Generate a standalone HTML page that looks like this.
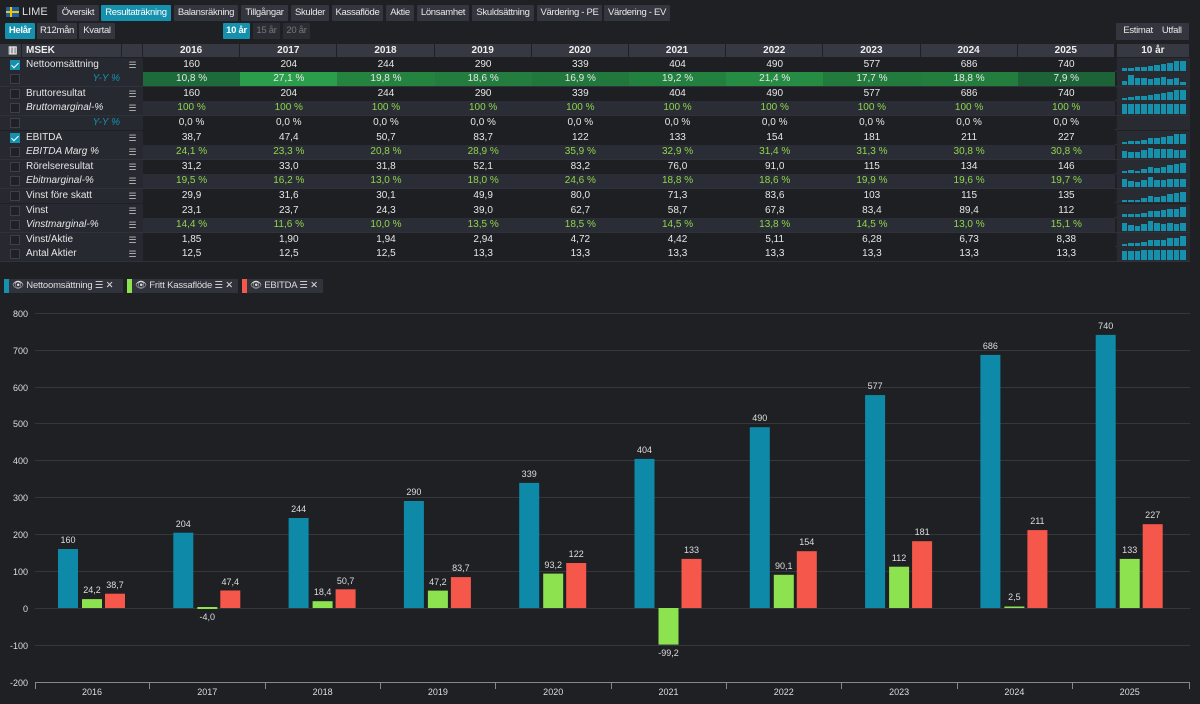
<!DOCTYPE html>
<html><head><meta charset="utf-8"><style>
*{box-sizing:border-box;margin:0;padding:0}
body{width:1200px;height:704px;background:#1e2024;font-family:"Liberation Sans",sans-serif;color:#e6e6e6;position:relative;overflow:hidden;font-size:10px}
.t{position:absolute;top:5px;height:16px;background:#33363e;color:#e8e8e8;font-size:9.5px;letter-spacing:-0.3px;line-height:16px;text-align:center;border-radius:1px;white-space:nowrap;overflow:hidden}
.t.a{background:#1591ae;color:#fff}
.hd{position:absolute;top:44px;left:0;width:1190px;height:13px;display:flex}
.hd div{background:#363942;border-right:1px solid #1e2024;font-weight:bold;font-size:10px;line-height:13px;text-align:center;color:#eee}
.r{position:absolute;left:0;width:1190px;height:14.6px;display:flex;border-bottom:1px solid #2f323a}
.r>div{font-size:10px;line-height:14px;text-align:center;height:14px;white-space:nowrap}
.c0{width:22px;background:#262930;position:relative}
.c1{width:100px;background:#262930;text-align:left!important;padding-left:4px}
.c2{width:21px;background:#262930;color:#bbb;font-size:9px!important}
.y{width:97.2px;background:#1d1f23}
.sp{width:73px;margin-left:2px;background:#282b32;display:flex;align-items:flex-end;padding:3px 3px 1px 5px;gap:1px}
.sp i{display:block;width:5.5px;background:#1591ae}
.it .y{background:#2a2d35;color:#8fd64a}
.it .c1{font-style:italic}
.cb{position:absolute;left:10px;top:2px;width:10px;height:10px;border:1px solid #3d4049;background:#1f2126}
.cb.k{background:#1591ae;border-color:#1591ae}
.cb.k:after{content:"";position:absolute;left:2px;top:0px;width:3px;height:6px;border:solid #fff;border-width:0 1.5px 1.5px 0;transform:rotate(45deg)}
.lg{position:absolute;top:279px;height:14px;background:#30333b;font-size:9.5px;letter-spacing:-0.2px;line-height:14px;color:#ddd;white-space:nowrap;overflow:hidden}
.lg b{position:absolute;left:0;top:0;width:5px;height:14px}
</style></head><body>
<div style="position:absolute;left:6px;top:7px;width:13px;height:10px;background:#1a5fa8"><div style="position:absolute;left:4px;top:0;width:2px;height:10px;background:#f5c400"></div><div style="position:absolute;left:0;top:4px;width:13px;height:2px;background:#f5c400"></div></div>
<div style="position:absolute;left:22px;top:6px;font-size:11px;color:#ddd">LIME</div>
<div class="t" style="left:57px;width:42px">Översikt</div>
<div class="t a" style="left:101px;width:70px">Resultaträkning</div>
<div class="t" style="left:174px;width:64px">Balansräkning</div>
<div class="t" style="left:241px;width:47px">Tillgångar</div>
<div class="t" style="left:291px;width:38px">Skulder</div>
<div class="t" style="left:332px;width:51px">Kassaflöde</div>
<div class="t" style="left:386px;width:28px">Aktie</div>
<div class="t" style="left:417px;width:52px">Lönsamhet</div>
<div class="t" style="left:472px;width:62px">Skuldsättning</div>
<div class="t" style="left:537px;width:65px">Värdering - PE</div>
<div class="t" style="left:604px;width:66px">Värdering - EV</div>
<div class="t a" style="top:23px;left:5px;width:30px;font-weight:bold">Helår</div>
<div class="t" style="top:23px;left:37px;width:40px">R12mån</div>
<div class="t" style="top:23px;left:79px;width:36px">Kvartal</div>
<div class="t a" style="top:23px;left:223px;width:27px;font-weight:bold">10 år</div>
<div class="t" style="top:23px;left:253px;width:27px;color:#777;background:#2a2d33">15 år</div>
<div class="t" style="top:23px;left:283px;width:27px;color:#777;background:#2a2d33">20 år</div>
<div class="t" style="top:23px;left:1116px;width:73px;height:17px;background:#33363e"><span style="margin-right:9px">Estimat</span>Utfall</div>

<div class="hd"><div style="width:22px;text-align:left;padding-left:8px">▥</div><div style="width:100px;text-align:left;padding-left:4px">MSEK</div><div style="width:21px"></div>
<div style="width:97.2px">2016</div><div style="width:97.2px">2017</div><div style="width:97.2px">2018</div><div style="width:97.2px">2019</div><div style="width:97.2px">2020</div><div style="width:97.2px">2021</div><div style="width:97.2px">2022</div><div style="width:97.2px">2023</div><div style="width:97.2px">2024</div><div style="width:97.2px">2025</div><div style="width:73px;margin-left:2px">10 år</div></div>

<div class="r" style="top:57.5px"><div class="c0"><span class="cb k"></span></div><div class="c1">Nettoomsättning</div><div class="c2">☰</div><div class="y">160</div><div class="y">204</div><div class="y">244</div><div class="y">290</div><div class="y">339</div><div class="y">404</div><div class="y">490</div><div class="y">577</div><div class="y">686</div><div class="y">740</div><div class="sp"><i style="height:22%"></i><i style="height:28%"></i><i style="height:33%"></i><i style="height:39%"></i><i style="height:46%"></i><i style="height:55%"></i><i style="height:66%"></i><i style="height:78%"></i><i style="height:93%"></i><i style="height:100%"></i></div></div>

<div class="r" style="top:72.1px"><div class="c0"><span class="cb"></span></div><div class="c1" style="font-style:italic;color:#1591ae;text-align:right!important;padding-right:2px">Y-Y %</div><div class="c2"></div><div class="y" style="background:#1d6a3a">10,8 %</div><div class="y" style="background:#2b9e4c">27,1 %</div><div class="y" style="background:#24843f">19,8 %</div><div class="y" style="background:#227d3e">18,6 %</div><div class="y" style="background:#21773c">16,9 %</div><div class="y" style="background:#23813f">19,2 %</div><div class="y" style="background:#268b43">21,4 %</div><div class="y" style="background:#227a3d">17,7 %</div><div class="y" style="background:#237e3e">18,8 %</div><div class="y" style="background:#1c6438">7,9 %</div><div class="sp"><i style="height:40%"></i><i style="height:100%"></i><i style="height:73%"></i><i style="height:69%"></i><i style="height:62%"></i><i style="height:71%"></i><i style="height:79%"></i><i style="height:65%"></i><i style="height:69%"></i><i style="height:29%"></i></div></div>

<div class="r" style="top:86.7px"><div class="c0"><span class="cb"></span></div><div class="c1">Bruttoresultat</div><div class="c2">☰</div><div class="y">160</div><div class="y">204</div><div class="y">244</div><div class="y">290</div><div class="y">339</div><div class="y">404</div><div class="y">490</div><div class="y">577</div><div class="y">686</div><div class="y">740</div><div class="sp"><i style="height:22%"></i><i style="height:28%"></i><i style="height:33%"></i><i style="height:39%"></i><i style="height:46%"></i><i style="height:55%"></i><i style="height:66%"></i><i style="height:78%"></i><i style="height:93%"></i><i style="height:100%"></i></div></div>

<div class="r it" style="top:101.3px"><div class="c0"><span class="cb"></span></div><div class="c1">Bruttomarginal-%</div><div class="c2">☰</div><div class="y">100 %</div><div class="y">100 %</div><div class="y">100 %</div><div class="y">100 %</div><div class="y">100 %</div><div class="y">100 %</div><div class="y">100 %</div><div class="y">100 %</div><div class="y">100 %</div><div class="y">100 %</div><div class="sp"><i style="height:100%"></i><i style="height:100%"></i><i style="height:100%"></i><i style="height:100%"></i><i style="height:100%"></i><i style="height:100%"></i><i style="height:100%"></i><i style="height:100%"></i><i style="height:100%"></i><i style="height:100%"></i></div></div>

<div class="r" style="top:115.9px"><div class="c0"><span class="cb"></span></div><div class="c1" style="font-style:italic;color:#1591ae;text-align:right!important;padding-right:2px">Y-Y %</div><div class="c2"></div><div class="y">0,0 %</div><div class="y">0,0 %</div><div class="y">0,0 %</div><div class="y">0,0 %</div><div class="y">0,0 %</div><div class="y">0,0 %</div><div class="y">0,0 %</div><div class="y">0,0 %</div><div class="y">0,0 %</div><div class="y">0,0 %</div><div class="sp"></div></div>

<div class="r" style="top:130.5px"><div class="c0"><span class="cb k"></span></div><div class="c1">EBITDA</div><div class="c2">☰</div><div class="y">38,7</div><div class="y">47,4</div><div class="y">50,7</div><div class="y">83,7</div><div class="y">122</div><div class="y">133</div><div class="y">154</div><div class="y">181</div><div class="y">211</div><div class="y">227</div><div class="sp"><i style="height:17%"></i><i style="height:21%"></i><i style="height:22%"></i><i style="height:37%"></i><i style="height:54%"></i><i style="height:59%"></i><i style="height:68%"></i><i style="height:80%"></i><i style="height:93%"></i><i style="height:100%"></i></div></div>

<div class="r it" style="top:145.1px"><div class="c0"><span class="cb"></span></div><div class="c1">EBITDA Marg %</div><div class="c2">☰</div><div class="y">24,1 %</div><div class="y">23,3 %</div><div class="y">20,8 %</div><div class="y">28,9 %</div><div class="y">35,9 %</div><div class="y">32,9 %</div><div class="y">31,4 %</div><div class="y">31,3 %</div><div class="y">30,8 %</div><div class="y">30,8 %</div><div class="sp"><i style="height:67%"></i><i style="height:65%"></i><i style="height:58%"></i><i style="height:80%"></i><i style="height:100%"></i><i style="height:92%"></i><i style="height:87%"></i><i style="height:87%"></i><i style="height:86%"></i><i style="height:86%"></i></div></div>

<div class="r" style="top:159.7px"><div class="c0"><span class="cb"></span></div><div class="c1">Rörelseresultat</div><div class="c2">☰</div><div class="y">31,2</div><div class="y">33,0</div><div class="y">31,8</div><div class="y">52,1</div><div class="y">83,2</div><div class="y">76,0</div><div class="y">91,0</div><div class="y">115</div><div class="y">134</div><div class="y">146</div><div class="sp"><i style="height:21%"></i><i style="height:23%"></i><i style="height:22%"></i><i style="height:36%"></i><i style="height:57%"></i><i style="height:52%"></i><i style="height:62%"></i><i style="height:79%"></i><i style="height:92%"></i><i style="height:100%"></i></div></div>

<div class="r it" style="top:174.3px"><div class="c0"><span class="cb"></span></div><div class="c1">Ebitmarginal-%</div><div class="c2">☰</div><div class="y">19,5 %</div><div class="y">16,2 %</div><div class="y">13,0 %</div><div class="y">18,0 %</div><div class="y">24,6 %</div><div class="y">18,8 %</div><div class="y">18,6 %</div><div class="y">19,9 %</div><div class="y">19,6 %</div><div class="y">19,7 %</div><div class="sp"><i style="height:79%"></i><i style="height:66%"></i><i style="height:53%"></i><i style="height:73%"></i><i style="height:100%"></i><i style="height:76%"></i><i style="height:76%"></i><i style="height:81%"></i><i style="height:80%"></i><i style="height:80%"></i></div></div>

<div class="r" style="top:188.9px"><div class="c0"><span class="cb"></span></div><div class="c1">Vinst före skatt</div><div class="c2">☰</div><div class="y">29,9</div><div class="y">31,6</div><div class="y">30,1</div><div class="y">49,9</div><div class="y">80,0</div><div class="y">71,3</div><div class="y">83,6</div><div class="y">103</div><div class="y">115</div><div class="y">135</div><div class="sp"><i style="height:22%"></i><i style="height:23%"></i><i style="height:22%"></i><i style="height:37%"></i><i style="height:59%"></i><i style="height:53%"></i><i style="height:62%"></i><i style="height:76%"></i><i style="height:85%"></i><i style="height:100%"></i></div></div>

<div class="r" style="top:203.5px"><div class="c0"><span class="cb"></span></div><div class="c1">Vinst</div><div class="c2">☰</div><div class="y">23,1</div><div class="y">23,7</div><div class="y">24,3</div><div class="y">39,0</div><div class="y">62,7</div><div class="y">58,7</div><div class="y">67,8</div><div class="y">83,4</div><div class="y">89,4</div><div class="y">112</div><div class="sp"><i style="height:21%"></i><i style="height:21%"></i><i style="height:22%"></i><i style="height:35%"></i><i style="height:56%"></i><i style="height:52%"></i><i style="height:61%"></i><i style="height:74%"></i><i style="height:80%"></i><i style="height:100%"></i></div></div>

<div class="r it" style="top:218.1px"><div class="c0"><span class="cb"></span></div><div class="c1">Vinstmarginal-%</div><div class="c2">☰</div><div class="y">14,4 %</div><div class="y">11,6 %</div><div class="y">10,0 %</div><div class="y">13,5 %</div><div class="y">18,5 %</div><div class="y">14,5 %</div><div class="y">13,8 %</div><div class="y">14,5 %</div><div class="y">13,0 %</div><div class="y">15,1 %</div><div class="sp"><i style="height:78%"></i><i style="height:63%"></i><i style="height:54%"></i><i style="height:73%"></i><i style="height:100%"></i><i style="height:78%"></i><i style="height:75%"></i><i style="height:78%"></i><i style="height:70%"></i><i style="height:82%"></i></div></div>

<div class="r" style="top:232.7px"><div class="c0"><span class="cb"></span></div><div class="c1">Vinst/Aktie</div><div class="c2">☰</div><div class="y">1,85</div><div class="y">1,90</div><div class="y">1,94</div><div class="y">2,94</div><div class="y">4,72</div><div class="y">4,42</div><div class="y">5,11</div><div class="y">6,28</div><div class="y">6,73</div><div class="y">8,38</div><div class="sp"><i style="height:22%"></i><i style="height:23%"></i><i style="height:23%"></i><i style="height:35%"></i><i style="height:56%"></i><i style="height:53%"></i><i style="height:61%"></i><i style="height:75%"></i><i style="height:80%"></i><i style="height:100%"></i></div></div>

<div class="r" style="top:247.3px"><div class="c0"><span class="cb"></span></div><div class="c1">Antal Aktier</div><div class="c2">☰</div><div class="y">12,5</div><div class="y">12,5</div><div class="y">12,5</div><div class="y">13,3</div><div class="y">13,3</div><div class="y">13,3</div><div class="y">13,3</div><div class="y">13,3</div><div class="y">13,3</div><div class="y">13,3</div><div class="sp"><i style="height:94%"></i><i style="height:94%"></i><i style="height:94%"></i><i style="height:100%"></i><i style="height:100%"></i><i style="height:100%"></i><i style="height:100%"></i><i style="height:100%"></i><i style="height:100%"></i><i style="height:100%"></i></div></div>

<div class="lg" style="left:4px;width:119px"><b style="background:#1591ae"></b><span style="margin-left:8px">👁︎ Nettoomsättning ☰ ✕</span></div>
<div class="lg" style="left:127px;width:111px"><b style="background:#8de24f"></b><span style="margin-left:8px">👁︎ Fritt Kassaflöde ☰ ✕</span></div>
<div class="lg" style="left:242px;width:81px"><b style="background:#f5574a"></b><span style="margin-left:8px">👁︎ EBITDA ☰ ✕</span></div>

<svg style="position:absolute;left:0;top:0" width="1200" height="704" font-family="Liberation Sans, sans-serif" font-size="9">
<g stroke="#34373d" stroke-width="1">
<line x1="35" x2="1190" y1="313.5" y2="313.5"/><line x1="35" x2="1190" y1="350.5" y2="350.5"/><line x1="35" x2="1190" y1="387.5" y2="387.5"/><line x1="35" x2="1190" y1="423.5" y2="423.5"/><line x1="35" x2="1190" y1="460.5" y2="460.5"/><line x1="35" x2="1190" y1="497.5" y2="497.5"/><line x1="35" x2="1190" y1="534.5" y2="534.5"/><line x1="35" x2="1190" y1="571.5" y2="571.5"/><line x1="35" x2="1190" y1="608.5" y2="608.5"/><line x1="35" x2="1190" y1="645.5" y2="645.5"/>
</g>
<g fill="#ddd" text-anchor="end">
<text x="28" y="317">800</text><text x="28" y="354">700</text><text x="28" y="391">600</text><text x="28" y="427">500</text><text x="28" y="464">400</text><text x="28" y="501">300</text><text x="28" y="538">200</text><text x="28" y="575">100</text><text x="28" y="612">0</text><text x="28" y="649">-100</text><text x="28" y="686">-200</text>
</g>
<g stroke="#888"><line x1="35" x2="1190" y1="682.5" y2="682.5"/>
<line x1="35.5" x2="35.5" y1="682" y2="689"/><line x1="149.5" x2="149.5" y1="682" y2="689"/><line x1="265.5" x2="265.5" y1="682" y2="689"/><line x1="380.5" x2="380.5" y1="682" y2="689"/><line x1="495.5" x2="495.5" y1="682" y2="689"/><line x1="611.5" x2="611.5" y1="682" y2="689"/><line x1="726.5" x2="726.5" y1="682" y2="689"/><line x1="841.5" x2="841.5" y1="682" y2="689"/><line x1="957.5" x2="957.5" y1="682" y2="689"/><line x1="1072.5" x2="1072.5" y1="682" y2="689"/><line x1="1189.5" x2="1189.5" y1="682" y2="689"/></g>
<g fill="#ddd" text-anchor="middle">
<g transform="translate(92,0)"><rect x="-34" y="549" width="20" height="59" fill="#0e8aa8"/><rect x="-10" y="599.1" width="20" height="8.9" fill="#8de24f"/><rect x="13" y="593.7" width="20" height="14.3" fill="#f5574a"/><text x="-24" y="543">160</text><text x="0" y="593">24,2</text><text x="23" y="588">38,7</text><text x="0" y="695">2016</text></g>
<g transform="translate(207.3,0)"><rect x="-34" y="532.7" width="20" height="75.3" fill="#0e8aa8"/><rect x="-10" y="607" width="20" height="2" fill="#8de24f"/><rect x="13" y="590.5" width="20" height="17.5" fill="#f5574a"/><text x="-24" y="527">204</text><text x="0" y="620">-4,0</text><text x="23" y="585">47,4</text><text x="0" y="695">2017</text></g>
<g transform="translate(322.6,0)"><rect x="-34" y="518" width="20" height="90" fill="#0e8aa8"/><rect x="-10" y="601.2" width="20" height="6.8" fill="#8de24f"/><rect x="13" y="589.3" width="20" height="18.7" fill="#f5574a"/><text x="-24" y="512">244</text><text x="0" y="595">18,4</text><text x="23" y="584">50,7</text><text x="0" y="695">2018</text></g>
<g transform="translate(437.9,0)"><rect x="-34" y="501" width="20" height="107" fill="#0e8aa8"/><rect x="-10" y="590.6" width="20" height="17.4" fill="#8de24f"/><rect x="13" y="577.1" width="20" height="30.9" fill="#f5574a"/><text x="-24" y="495">290</text><text x="0" y="585">47,2</text><text x="23" y="571">83,7</text><text x="0" y="695">2019</text></g>
<g transform="translate(553.2,0)"><rect x="-34" y="482.9" width="20" height="125.1" fill="#0e8aa8"/><rect x="-10" y="573.6" width="20" height="34.4" fill="#8de24f"/><rect x="13" y="563" width="20" height="45" fill="#f5574a"/><text x="-24" y="477">339</text><text x="0" y="568">93,2</text><text x="23" y="557">122</text><text x="0" y="695">2020</text></g>
<g transform="translate(668.5,0)"><rect x="-34" y="458.9" width="20" height="149.1" fill="#0e8aa8"/><rect x="-10" y="608" width="20" height="36.6" fill="#8de24f"/><rect x="13" y="558.9" width="20" height="49.1" fill="#f5574a"/><text x="-24" y="453">404</text><text x="0" y="656">-99,2</text><text x="23" y="553">133</text><text x="0" y="695">2021</text></g>
<g transform="translate(783.8,0)"><rect x="-34" y="427.2" width="20" height="180.8" fill="#0e8aa8"/><rect x="-10" y="574.8" width="20" height="33.2" fill="#8de24f"/><rect x="13" y="551.2" width="20" height="56.8" fill="#f5574a"/><text x="-24" y="421">490</text><text x="0" y="569">90,1</text><text x="23" y="545">154</text><text x="0" y="695">2022</text></g>
<g transform="translate(899.1,0)"><rect x="-34" y="395.1" width="20" height="212.9" fill="#0e8aa8"/><rect x="-10" y="566.7" width="20" height="41.3" fill="#8de24f"/><rect x="13" y="541.2" width="20" height="66.8" fill="#f5574a"/><text x="-24" y="389">577</text><text x="0" y="561">112</text><text x="23" y="535">181</text><text x="0" y="695">2023</text></g>
<g transform="translate(1014.4,0)"><rect x="-34" y="354.9" width="20" height="253.1" fill="#0e8aa8"/><rect x="-10" y="606.5" width="20" height="1.5" fill="#8de24f"/><rect x="13" y="530.1" width="20" height="77.9" fill="#f5574a"/><text x="-24" y="349">686</text><text x="0" y="600">2,5</text><text x="23" y="524">211</text><text x="0" y="695">2024</text></g>
<g transform="translate(1129.7,0)"><rect x="-34" y="334.9" width="20" height="273.1" fill="#0e8aa8"/><rect x="-10" y="558.9" width="20" height="49.1" fill="#8de24f"/><rect x="13" y="524.2" width="20" height="83.8" fill="#f5574a"/><text x="-24" y="329">740</text><text x="0" y="553">133</text><text x="23" y="518">227</text><text x="0" y="695">2025</text></g>
</g>
</svg>
</body></html>
